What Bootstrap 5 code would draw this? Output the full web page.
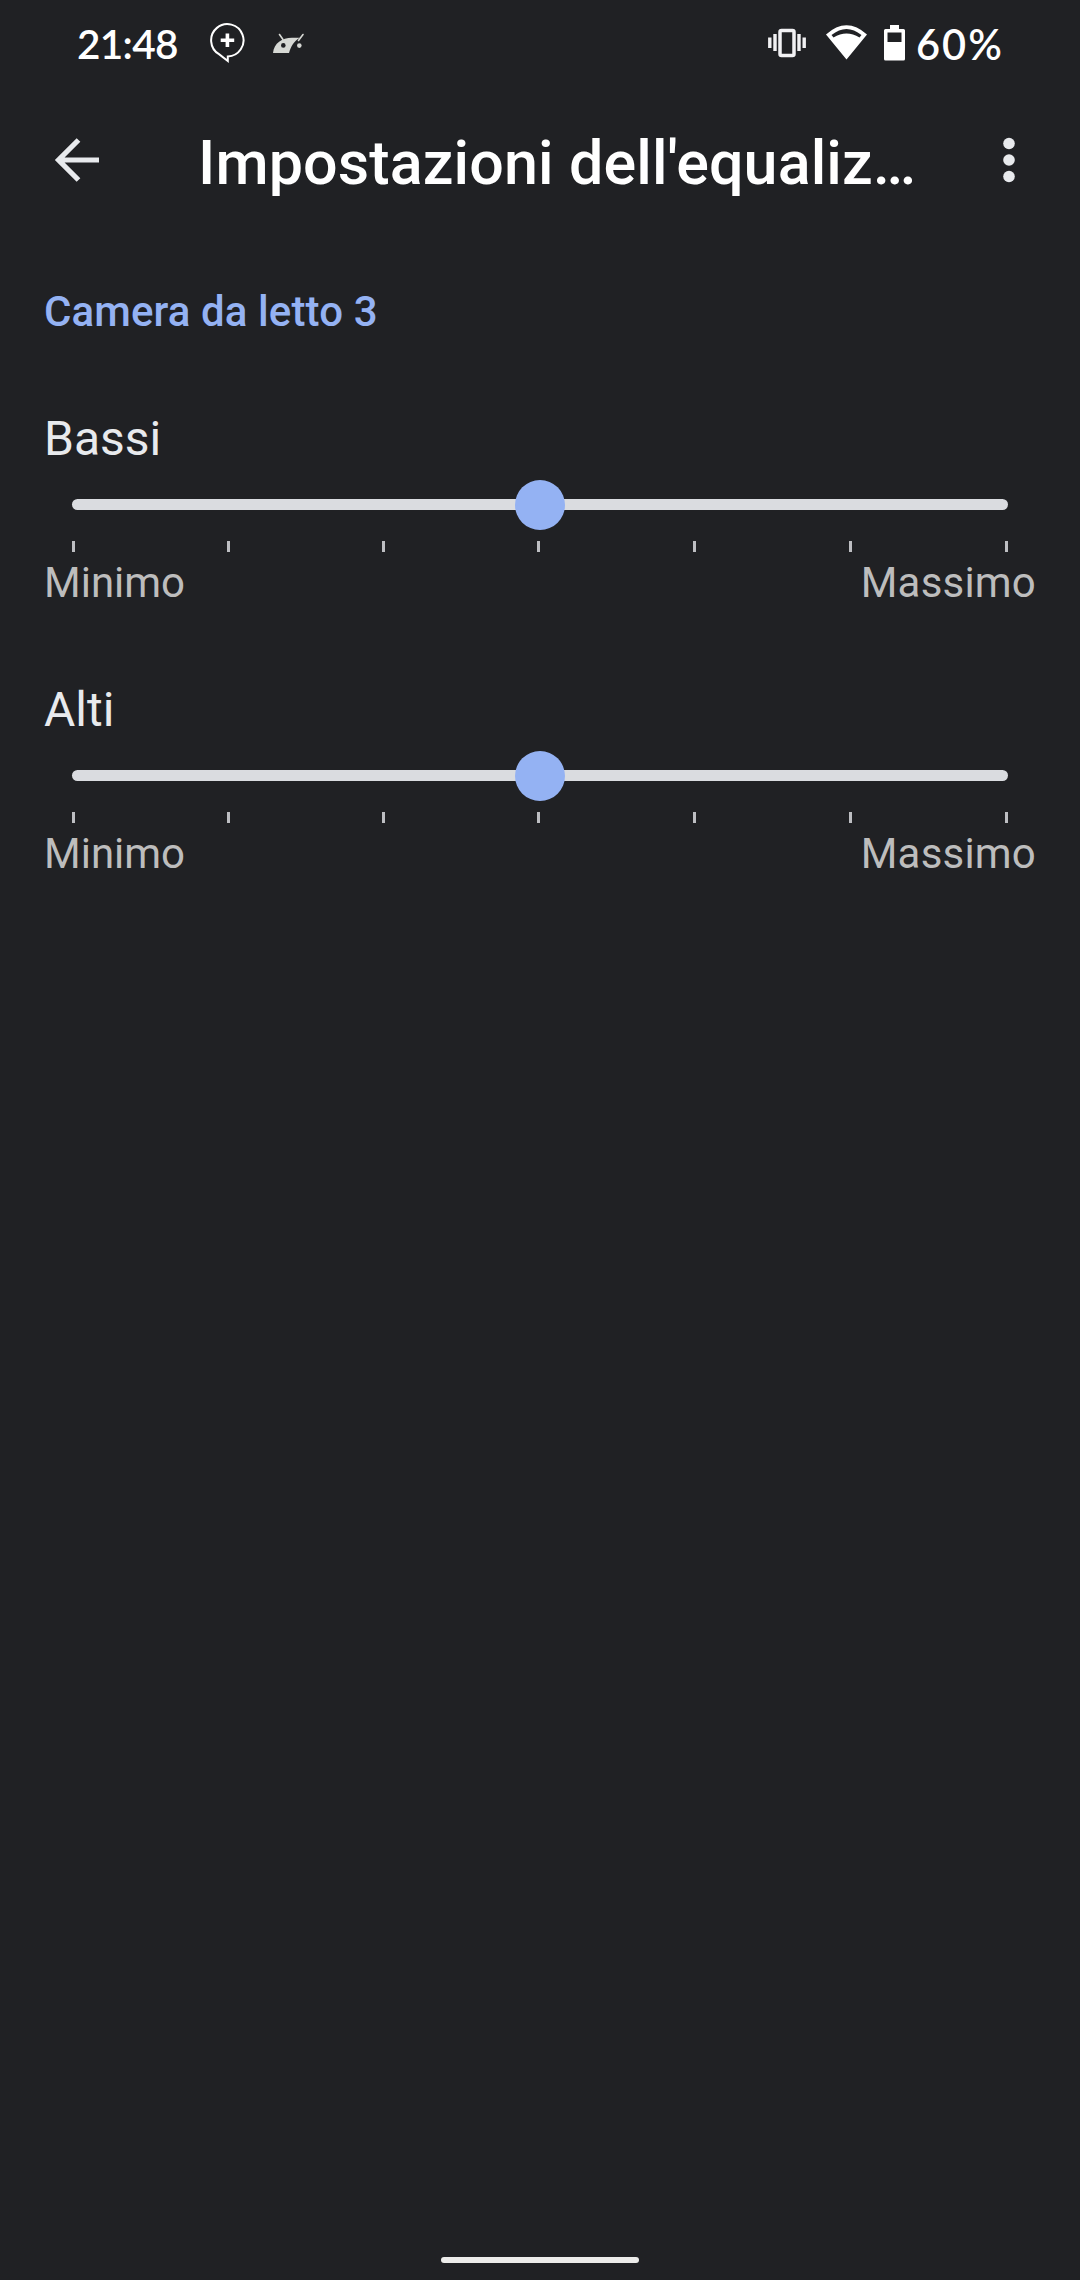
<!DOCTYPE html>
<html lang="it" data-bs-theme="dark">
<head>
<meta charset="utf-8">
<meta name="viewport" content="width=device-width, initial-scale=1">
<title>Impostazioni dell'equalizzatore</title>
<link href="https://cdn.jsdelivr.net/npm/bootstrap@5.3.0/dist/css/bootstrap.min.css" rel="stylesheet">
<style>
body{background:#202124;font-family:Roboto,"Noto Sans",sans-serif;color:#fff;overflow:hidden}
.screen{height:2280px}
.status{height:88px;padding:0 76px 0 77px;font-family:Lato,sans-serif;font-size:40.5px;font-weight:600;line-height:48px}
.clock{width:133px;letter-spacing:-.7px}
.battery{width:88px;font-size:41.5px;letter-spacing:2px;white-space:nowrap}
.appbar{height:144px;padding:0 48px 0 54px}
.heading{font-size:61px;line-height:72px;font-weight:500;letter-spacing:.12px;margin:6px 0 0 96px}
.room{color:#94b2f3;font-size:42px;line-height:48px;font-weight:500;letter-spacing:.1px;padding-top:56px;margin-bottom:75px}
.content{padding:0 44px}
.band{height:271px}
.band-name{font-size:48px;line-height:56px;color:#e8eaed}
.track{height:11px;border-radius:6px;background:#dadce0;margin:32px 28px 0}
.thumb{width:50px;height:50px;border-radius:50%;background:#94b2f3;flex:none}
.ticks{margin:31px 28px 0}
.ticks i{width:3px;height:11px;background:#bdbec2;margin-right:152px}
.ticks i:nth-child(n+4){margin-right:153px}
.ticks i:last-child{margin-right:0}
.limits{font-size:42px;line-height:48px;color:#bdbdbd;margin-top:7px}
.limits span:last-child{letter-spacing:.2px}
.homebar{width:198px;height:6px;border-radius:3px;background:#ececea;margin-bottom:17px}
svg{display:block;flex:none}
</style>
<script src="https://cdn.jsdelivr.net/npm/bootstrap@5.3.0/dist/js/bootstrap.bundle.min.js"></script>
</head>
<body>
<div class="screen d-flex flex-column">
  <div class="status d-flex align-items-center">
    <span class="clock">21:48</span>
    <svg width="110" height="88" viewBox="210 0 110 88">
      <path d="M227.800 61V56.500A16.200 16.200 0 1 0 219 54.200Z" fill="none" stroke="#fff" stroke-width="2"/>
      <path d="M227.400 33.500v13.500M220.700 40.300h13.500" stroke="#fff" stroke-width="3.600"/>
      <path d="M273 53C274 43 282 37.700 292 37.700H300C294 41 291 46 289 53Z" fill="#d6d8d4"/>
      <path d="M279.500 34.500l3.500 5M303 34.500l-4.500 6" stroke="#d6d8d4" stroke-width="1.600" stroke-linecap="round"/>
      <circle cx="283.300" cy="45.400" r="2.300" fill="#202124"/><circle cx="299.300" cy="45.600" r="2.300" fill="#d6d8d4"/>
    </svg>
    <svg class="ms-auto" width="151" height="88" viewBox="765 0 151 88">
      <rect x="780" y="30.500" width="14" height="25" rx="1.500" fill="none" stroke="#f1f1f3" stroke-width="3.500"/>
      <path d="M775 34v17M799 34v17" stroke="#f1f1f3" stroke-width="3.400"/>
      <path d="M769.800 37.500v10.500M804.200 37.500v10.500" stroke="#f1f1f3" stroke-width="3.400"/>
      <path d="M826 34.500Q846.500 16 867 34.500L846.500 59.500ZM831.500 35L833.500 37.500Q846.500 29.500 859.500 37.500L861.500 35Q846.500 23 831.500 35Z" fill="#fff" fill-rule="evenodd"/>
      <path d="M890 25h9v4h4.500q1.500 0 1.500 1.500v28.500q0 1.500-1.500 1.500h-18q-1.500 0-1.500-1.500v-28.500q0-1.500 1.500-1.500h4.500ZM887.500 32.500v9.500h14v-9.500Z" fill="#fff" fill-rule="evenodd"/>
    </svg>
    <span class="battery">60%</span>
  </div>
  <header class="appbar d-flex align-items-center">
    <svg width="48" height="48" viewBox="0 0 48 48"><path d="M24.500 4L4.500 24L24.500 44M5 24H45" fill="none" stroke="#e8eaed" stroke-width="5.200"/></svg>
    <h1 class="heading text-nowrap">Impostazioni dell'equaliz…</h1>
    <svg class="ms-auto" width="46" height="48" viewBox="0 0 46 48" fill="#e8eaed"><circle cx="23" cy="7.500" r="5.800"/><circle cx="23" cy="24" r="5.800"/><circle cx="23" cy="40.500" r="5.800"/></svg>
  </header>
  <main class="content flex-grow-1">
    <h2 class="room">Camera da letto 3</h2>
    <section class="band">
      <div class="band-name">Bassi</div>
      <div class="track d-flex align-items-center justify-content-center"><div class="thumb"></div></div>
      <div class="ticks d-flex"><i></i><i></i><i></i><i></i><i></i><i></i><i></i></div>
      <div class="limits d-flex justify-content-between"><span>Minimo</span><span>Massimo</span></div>
    </section>
    <section class="band">
      <div class="band-name">Alti</div>
      <div class="track d-flex align-items-center justify-content-center"><div class="thumb"></div></div>
      <div class="ticks d-flex"><i></i><i></i><i></i><i></i><i></i><i></i><i></i></div>
      <div class="limits d-flex justify-content-between"><span>Minimo</span><span>Massimo</span></div>
    </section>
  </main>
  <div class="homebar align-self-center"></div>
</div>
</body>
</html>
